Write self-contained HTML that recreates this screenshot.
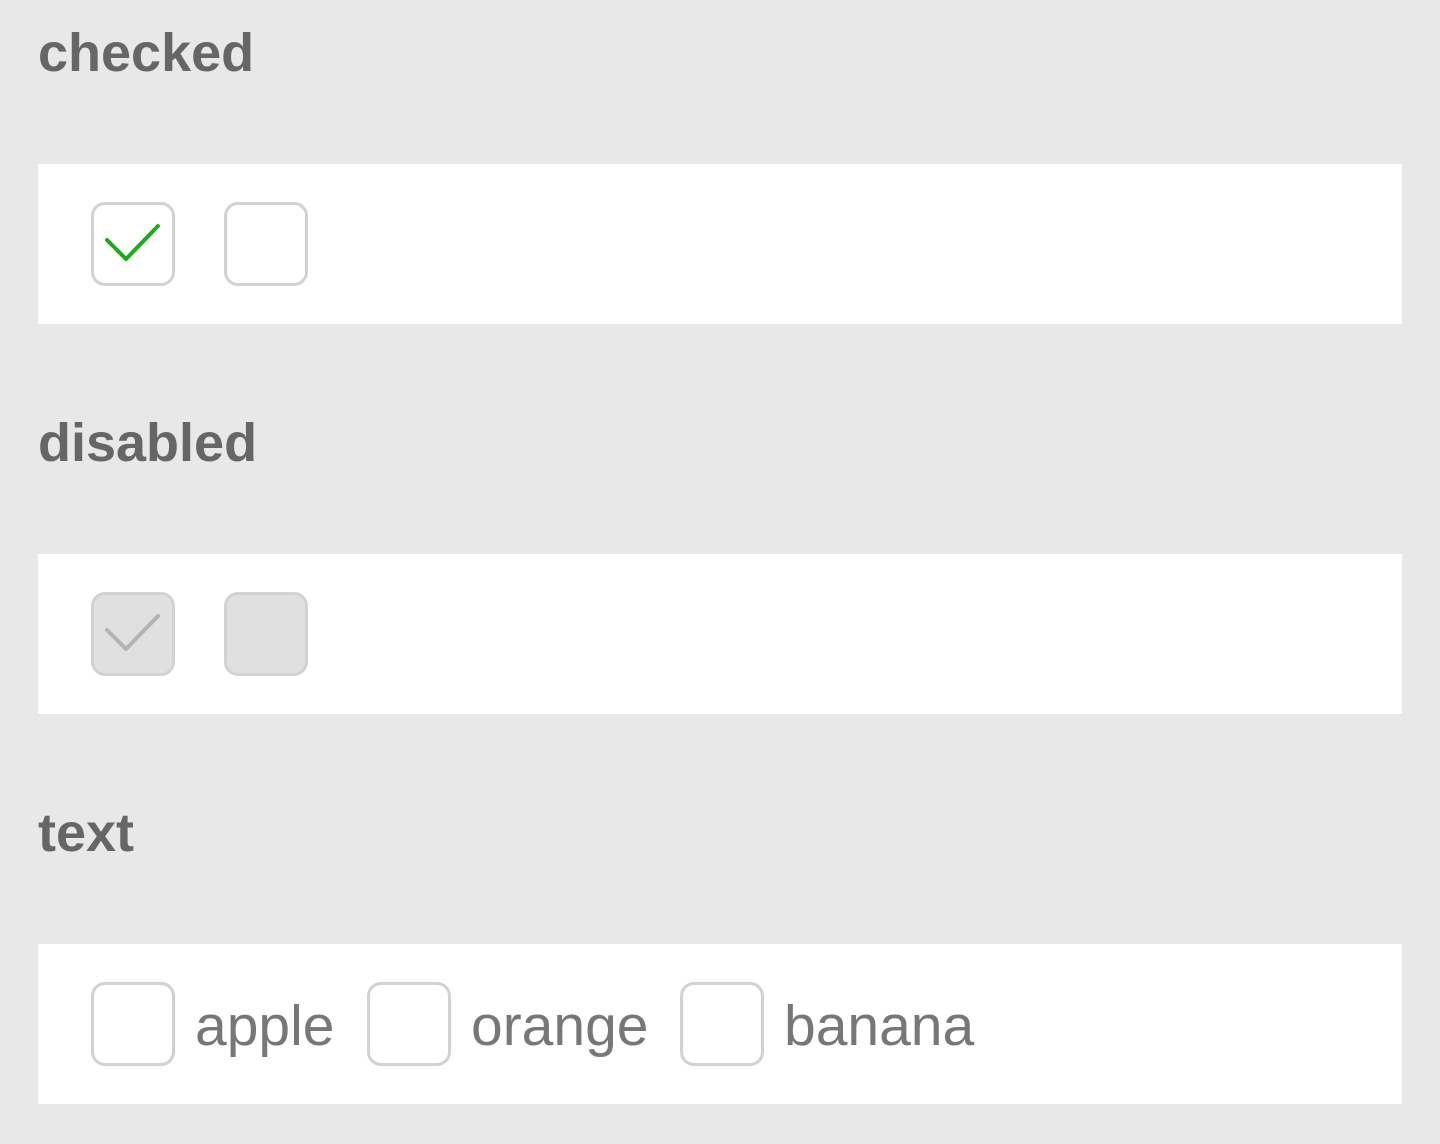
<!DOCTYPE html>
<html><head><style>
body{margin:0;width:1440px;height:1144px;background:#e8e8e8;font-family:"Liberation Sans",sans-serif;position:relative;overflow:hidden}
.h{position:absolute;left:38px;font-size:54px;font-weight:bold;color:#666;line-height:1}
.p{position:absolute;left:38px;width:1364px;height:160px;background:#fff}
.b{position:absolute;top:38px;width:78px;height:78px;border:3px solid #d2d2d2;border-radius:14px;box-sizing:content-box}
.b svg{position:absolute;left:-3px;top:-3px}
.d{background:#e0e0e0}
.t{position:absolute;top:54px;font-size:57px;color:#777;line-height:1}
</style></head><body>
<div class="h" style="top:26px">checked</div>
<div class="p" style="top:164px">
<div class="b" style="left:53px"><svg width="84" height="84"><path d="M16 38 L35 57 L67 24" fill="none" stroke="#1aad19" stroke-width="4" stroke-linecap="round" stroke-linejoin="round"/></svg></div>
<div class="b" style="left:186px"></div>
</div>
<div class="h" style="top:416px">disabled</div>
<div class="p" style="top:554px">
<div class="b d" style="left:53px"><svg width="84" height="84"><path d="M16 38 L35 57 L67 24" fill="none" stroke="#b3b3b3" stroke-width="4" stroke-linecap="round" stroke-linejoin="round"/></svg></div>
<div class="b d" style="left:186px"></div>
</div>
<div class="h" style="top:806px">text</div>
<div class="p" style="top:944px">
<div class="b" style="left:53px"></div><div class="t" style="left:157px">apple</div>
<div class="b" style="left:329px"></div><div class="t" style="left:433px">orange</div>
<div class="b" style="left:642px"></div><div class="t" style="left:746px">banana</div>
</div>
</body></html>
